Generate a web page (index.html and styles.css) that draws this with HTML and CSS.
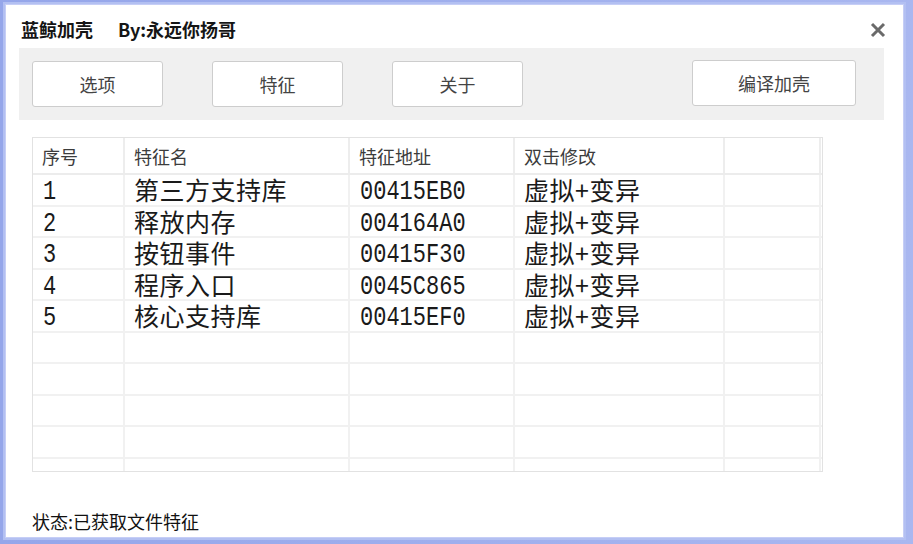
FILE: index.html
```html
<!DOCTYPE html>
<html lang="zh-CN">
<head>
<meta charset="utf-8">
<title>蓝鲸加壳</title>
<link rel="stylesheet" href="styles.css">
</head>
<body>
<div class="window">
  <div class="titlebar">
    <span class="title">蓝鲸加壳</span>
    <span class="title by">By:永远你扬哥</span>
    <span class="close" aria-label="关闭">
      <svg width="16" height="16" viewBox="0 0 16 16"><path d="M2 2 L14 14 M14 2 L2 14" stroke="#6a6a6a" stroke-width="3" stroke-linecap="butt" fill="none"/></svg>
    </span>
  </div>
  <div class="toolbar">
    <div class="btn">选项</div>
    <div class="btn">特征</div>
    <div class="btn">关于</div>
    <div class="btn btn-wide">编译加壳</div>
  </div>
  <div class="grid">
    <div class="row head">
      <div class="cell">序号</div>
      <div class="cell">特征名</div>
      <div class="cell">特征地址</div>
      <div class="cell">双击修改</div>
      <div class="cell"></div>
    </div>
    <div class="row">
      <div class="cell mono"><span>1</span></div>
      <div class="cell cjk">第三方支持库</div>
      <div class="cell mono"><span>00415EB0</span></div>
      <div class="cell cjk">虚拟+变异</div>
      <div class="cell"></div>
    </div>
    <div class="row">
      <div class="cell mono"><span>2</span></div>
      <div class="cell cjk">释放内存</div>
      <div class="cell mono"><span>004164A0</span></div>
      <div class="cell cjk">虚拟+变异</div>
      <div class="cell"></div>
    </div>
    <div class="row">
      <div class="cell mono"><span>3</span></div>
      <div class="cell cjk">按钮事件</div>
      <div class="cell mono"><span>00415F30</span></div>
      <div class="cell cjk">虚拟+变异</div>
      <div class="cell"></div>
    </div>
    <div class="row">
      <div class="cell mono"><span>4</span></div>
      <div class="cell cjk">程序入口</div>
      <div class="cell mono"><span>0045C865</span></div>
      <div class="cell cjk">虚拟+变异</div>
      <div class="cell"></div>
    </div>
    <div class="row">
      <div class="cell mono"><span>5</span></div>
      <div class="cell cjk">核心支持库</div>
      <div class="cell mono"><span>00415EF0</span></div>
      <div class="cell cjk">虚拟+变异</div>
      <div class="cell"></div>
    </div>
    <div class="row"><div class="cell"></div><div class="cell"></div><div class="cell"></div><div class="cell"></div><div class="cell"></div></div>
    <div class="row"><div class="cell"></div><div class="cell"></div><div class="cell"></div><div class="cell"></div><div class="cell"></div></div>
    <div class="row"><div class="cell"></div><div class="cell"></div><div class="cell"></div><div class="cell"></div><div class="cell"></div></div>
    <div class="row"><div class="cell"></div><div class="cell"></div><div class="cell"></div><div class="cell"></div><div class="cell"></div></div>
    <div class="row"><div class="cell"></div><div class="cell"></div><div class="cell"></div><div class="cell"></div><div class="cell"></div></div>
  </div>
  <div class="status">状态:已获取文件特征</div>
</div>
</body>
</html>
```

FILE: styles.css
```css
* { box-sizing: border-box; }

html, body {
  margin: 0;
  height: 544px;
  overflow: hidden;
}

body {
  background: linear-gradient(90deg, #95a6ea 0%, #a9b7f0 100%);
  padding: 5px 10px 7px 6px;
  font-family: "Noto Sans CJK SC", "Liberation Sans", sans-serif;
}

.window {
  background: #fff;
  height: 532px;
  display: flex;
  flex-direction: column;
  box-shadow: 0 0 0 1px #c6cef6, 0 0 0 3px #b3c0f2;
}

.titlebar {
  height: 43px;
  display: flex;
  align-items: center;
  padding: 4px 17px 0 15px;
}

.title {
  font-weight: bold;
  font-size: 18px;
  color: #151515;
}

.by { margin-left: 25px; }

.close {
  margin-left: auto;
  display: flex;
  padding-top: 3px;
}

.toolbar {
  margin-left: 13px;
  width: 865px;
  height: 72px;
  background: #f0f0f0;
  display: flex;
  align-items: flex-start;
  gap: 49px;
  padding: 13px 28px 0 13px;
}

.btn {
  width: 131px;
  height: 46px;
  background: #fff;
  border: 1px solid #cdcdcd;
  border-radius: 3px;
  display: flex;
  align-items: center;
  justify-content: center;
  font-size: 18px;
  color: #444;
}

.btn-wide {
  width: 164px;
  margin-left: auto;
  margin-top: -1px;
}

.grid {
  margin: 17px 0 0 26px;
  width: 791px;
  height: 335px;
  border: 1px solid #e2e2e2;
  overflow: hidden;
  padding-bottom: 3px;
}

.row {
  display: grid;
  grid-template-columns: 92px 225px 165px 210px 96px;
  height: 31.5px;
  border-bottom: 2px solid #f1f1f1;
}

.row.head {
  height: 37px;
  border-bottom: 2px solid #ececec;
}

.cell {
  border-right: 2px solid #f1f1f1;
  padding-left: 9px;
  display: flex;
  align-items: center;
  white-space: nowrap;
  color: #1a1a1a;
}

.head .cell {
  font-size: 18px;
  color: #3c3c3c;
  border-right-color: #ededed;
  padding-top: 1px;
}

.cjk {
  font-size: 25px;
  line-height: 29px;
  letter-spacing: 0.5px;
}

.mono {
  font-family: "Liberation Mono", "DejaVu Sans Mono", monospace;
  font-size: 22px;
  line-height: 29px;
  padding-left: 10px;
}

.mono span {
  display: inline-block;
  transform: translateY(2px) scaleY(1.28);
}

.status {
  margin-top: auto;
  padding: 0 0 4px 26px;
  font-size: 18px;
  line-height: 24px;
  color: #111;
}
```
